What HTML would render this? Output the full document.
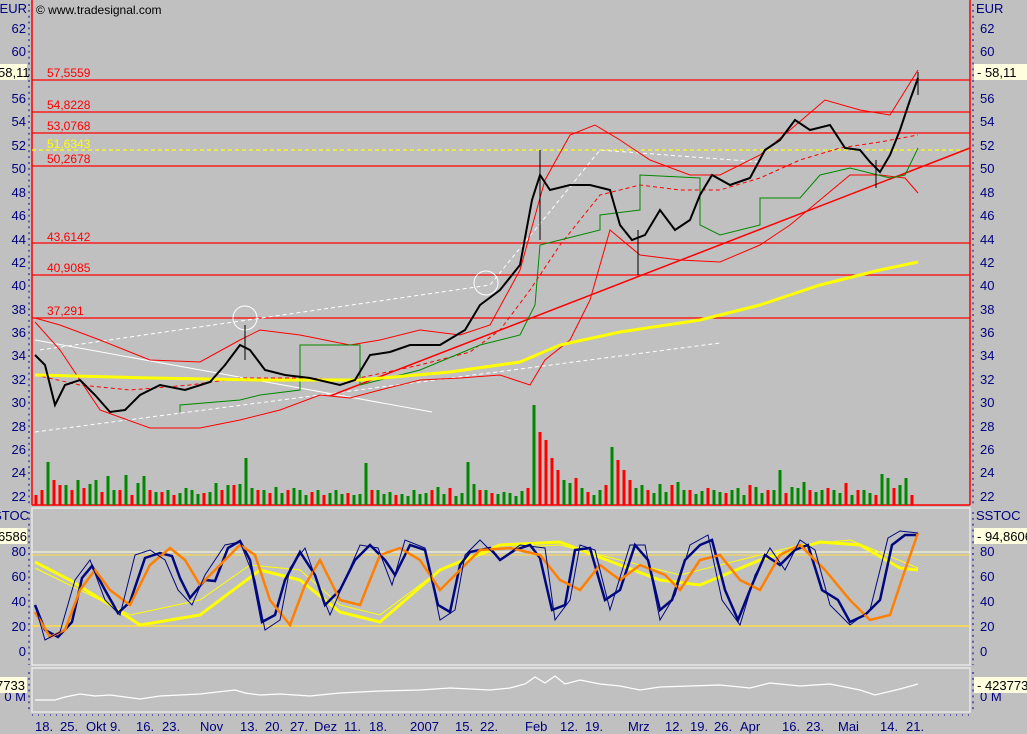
<!DOCTYPE html>
<html><head><style>
body{margin:0;width:1027px;height:734px;background:#c0c0c0;overflow:hidden;font-family:"Liberation Sans",sans-serif}
svg{position:absolute;left:0;top:0}
text{font-family:"Liberation Sans",sans-serif;font-size:13px}
</style></head><body>
<svg width="1027" height="734" viewBox="0 0 1027 734">
<line x1="32" y1="0" x2="32" y2="505" stroke="#f00" stroke-width="1.5"/>
<line x1="970" y1="0" x2="970" y2="505" stroke="#f00" stroke-width="1.5"/>
<line x1="32" y1="505" x2="970" y2="505" stroke="#f00" stroke-width="1.5"/>
<rect x="32" y="508" width="938" height="157" fill="none" stroke="#e8e8e8" stroke-width="1.5"/>
<rect x="32" y="668" width="938" height="44" fill="none" stroke="#e8e8e8" stroke-width="1.5"/>
<!-- axis ticks -->
<g stroke="#00007f" stroke-width="1" stroke-dasharray="2,3.85">
<line x1="29" y1="4" x2="29" y2="505"/><line x1="973" y1="4" x2="973" y2="505"/>
<line x1="29" y1="512" x2="29" y2="665"/><line x1="973" y1="512" x2="973" y2="665"/>
<line x1="29" y1="672" x2="29" y2="712"/><line x1="973" y1="672" x2="973" y2="712"/>
</g>
<text x="36" y="14" fill="#000" style="font-size:12px">© www.tradesignal.com</text>
<g stroke="#f00" stroke-width="1.2">
<line x1="32" y1="80" x2="970" y2="80"/><line x1="32" y1="112" x2="970" y2="112"/>
<line x1="32" y1="133" x2="970" y2="133"/><line x1="32" y1="166" x2="970" y2="166"/>
<line x1="32" y1="243" x2="970" y2="243"/><line x1="32" y1="275" x2="970" y2="275"/>
<line x1="32" y1="318" x2="970" y2="318"/></g>
<line x1="32" y1="150" x2="970" y2="150" stroke="#ff0" stroke-width="1.2" stroke-dasharray="4,3"/>
<g fill="#f00" style="font-size:12px"><text x="47" y="77" style="font-size:12px">57,5559</text><text x="47" y="109" style="font-size:12px">54,8228</text><text x="47" y="130" style="font-size:12px">53,0768</text><text x="47" y="163" style="font-size:12px">50,2678</text><text x="47" y="241" style="font-size:12px">43,6142</text><text x="47" y="272" style="font-size:12px">40,9085</text><text x="47" y="315" style="font-size:12px">37,291</text></g>
<text x="47" y="148" fill="#ff0" style="font-size:12px">51,6343</text>
<g stroke="#fff" stroke-width="1" fill="none">
<line x1="35" y1="340" x2="432" y2="412"/>
<path d="M35 432 L720 343" stroke-dasharray="4,3"/>
<path d="M40 350 L490 285 L600 150 L760 162" stroke-dasharray="4,3"/>
<circle cx="245" cy="318" r="12"/><circle cx="486" cy="283" r="12"/>
</g>
<line x1="330" y1="396" x2="970" y2="148" stroke="#f00" stroke-width="1.5"/>
<g fill="none" stroke="#f00" stroke-width="1">
<path d="M35 318 L60 325 L100 340 L150 360 L200 362 L240 340 L260 330 L300 335 L350 345 L380 340 L420 330 L460 335 L490 325 L520 270 L545 180 L570 135 L595 125 L620 140 L650 160 L690 175 L720 175 L760 155 L790 130 L825 100 L860 110 L890 115 L918 70"/>
<path d="M35 322 L60 350 L100 410 L150 428 L200 428 L240 420 L280 410 L320 395 L350 398 L380 390 L420 380 L460 378 L500 375 L530 385 L545 360 L570 340 L590 300 L610 230 L640 255 L680 260 L720 262 L760 245 L790 225 L820 200 L850 175 L880 175 L905 178 L918 193"/>
<path d="M35 375 L80 385 L130 390 L190 385 L240 378 L300 378 L350 380 L420 365 L470 352 L500 330 L530 290 L560 245 L600 195 L640 185 L680 190 L720 190 L760 178 L800 160 L840 148 L880 142 L918 135" stroke-dasharray="4,3"/>
</g>
<g fill="none" stroke="#080" stroke-width="1">
<path d="M180 412 L180 405 L240 400 L260 395 L300 390 L300 345 L360 345 L360 385 L420 370 L480 345 L520 335 L535 305 L540 245 L600 230 L600 215 L640 210 L640 175 L700 178 L700 225 L720 235 L760 225 L760 198 L800 198 L820 175 L850 168 L890 178 L905 175 L918 148"/>
</g>
<path d="M35 375 L150 378 L260 380 L360 380 L450 372 L520 362 L560 345 L620 332 L700 320 L760 305 L820 285 L880 270 L918 262" fill="none" stroke="#ff0" stroke-width="3"/>
<path d="M35 355 L45 365 L55 405 L65 385 L80 380 L95 395 L110 412 L125 410 L140 395 L160 385 L185 390 L210 382 L225 365 L240 345 L250 350 L265 370 L285 375 L310 378 L340 385 L355 380 L370 355 L390 352 L410 345 L440 345 L465 330 L480 305 L500 290 L520 265 L532 200 L540 175 L550 190 L570 185 L590 185 L610 190 L620 225 L632 240 L645 235 L660 210 L675 230 L690 220 L700 195 L712 175 L730 185 L750 178 L765 150 L780 140 L795 120 L810 130 L830 125 L845 148 L860 150 L870 162 L880 172 L890 155 L900 130 L910 100 L918 78" fill="none" stroke="#000" stroke-width="2"/>
<g stroke="#000" stroke-width="1">
<line x1="245" y1="325" x2="245" y2="360"/><line x1="540" y1="150" x2="540" y2="240"/><line x1="638" y1="230" x2="638" y2="275"/><line x1="918" y1="72" x2="918" y2="95"/><line x1="876" y1="160" x2="876" y2="188"/>
</g>
<g stroke-width="3">
<path stroke="#f00" d="M36 505V495M42 505V490M54 505V480M60 505V485M72 505V490M84 505V488M102 505V492M120 505V490M132 505V495M150 505V490M162 505V492M174 505V495M204 505V493M222 505V490M234 505V485M258 505V490M270 505V493M288 505V490M312 505V492M324 505V495M348 505V493M372 505V490M396 505V495M432 505V490M450 505V488M480 505V490M492 505V493M528 505V488M540 505V432M546 505V440M552 505V458M558 505V470M576 505V478M588 505V492M606 505V485M618 505V460M624 505V470M630 505V480M648 505V490M672 505V485M690 505V490M708 505V488M726 505V493M750 505V485M768 505V490M786 505V493M810 505V490M828 505V488M846 505V483M858 505V490M876 505V495M894 505V488M912 505V495"/>
<path stroke="#080" d="M48 505V462M66 505V485M78 505V480M90 505V484M96 505V480M108 505V476M114 505V490M126 505V475M138 505V483M144 505V476M156 505V492M168 505V490M180 505V493M186 505V488M192 505V490M198 505V494M210 505V492M216 505V483M228 505V485M240 505V484M246 505V458M252 505V488M264 505V490M276 505V487M282 505V493M294 505V488M300 505V490M306 505V495M318 505V490M330 505V493M336 505V490M342 505V494M354 505V495M360 505V494M366 505V463M378 505V490M384 505V494M390 505V492M402 505V494M408 505V496M414 505V490M420 505V494M426 505V493M438 505V487M444 505V494M456 505V496M462 505V493M468 505V462M474 505V484M486 505V490M498 505V494M504 505V492M510 505V493M516 505V496M522 505V491M534 505V405M564 505V480M570 505V483M582 505V488M594 505V495M600 505V490M612 505V447M636 505V488M642 505V485M654 505V493M660 505V484M666 505V492M678 505V482M684 505V490M696 505V494M702 505V491M714 505V490M720 505V492M732 505V490M738 505V488M744 505V495M756 505V487M762 505V493M774 505V490M780 505V470M792 505V487M798 505V488M804 505V482M816 505V492M822 505V490M834 505V490M840 505V493M852 505V495M864 505V490M870 505V493M882 505V474M888 505V478M900 505V485M906 505V478"/>
</g>
<line x1="32" y1="552" x2="970" y2="552" stroke="#ffd" stroke-width="1"/>
<line x1="32" y1="555" x2="970" y2="555" stroke="#fd4" stroke-width="1"/>
<line x1="32" y1="626" x2="970" y2="626" stroke="#fd4" stroke-width="1.5"/>
<path d="M35 562 L70 580 L110 605 L140 625 L200 615 L260 570 L300 580 L340 612 L380 622 L440 570 L500 545 L560 542 L620 565 L660 580 L700 585 L760 560 L820 542 L860 545 L900 568 L918 570" fill="none" stroke="#ff0" stroke-width="3"/>
<path d="M35 568 L80 590 L130 615 L200 600 L250 565 L300 570 L340 605 L380 615 L440 570 L500 548 L560 545 L620 560 L680 575 L740 560 L800 545 L850 540 L918 568" fill="none" stroke="#ff0" stroke-width="1"/>
<path d="M35 605 L45 630 L58 637 L72 622 L82 578 L92 566 L105 590 L118 613 L130 602 L145 558 L160 553 L172 556 L180 578 L190 598 L205 580 L215 581 L228 548 L240 541 L250 560 L262 622 L275 615 L285 580 L300 552 L315 575 L325 605 L340 590 L355 560 L370 545 L385 560 L395 575 L410 545 L425 550 L438 605 L450 612 L460 565 L470 552 L490 548 L500 560 L515 550 L530 545 L540 558 L552 610 L565 605 L575 550 L590 548 L605 600 L620 590 L635 545 L648 560 L660 610 L672 600 L685 560 L700 545 L712 540 L725 590 L738 620 L752 585 L765 555 L780 565 L795 550 L808 545 L822 590 L838 600 L850 622 L865 615 L880 600 L892 545 L905 535 L918 535" fill="none" stroke="#00087f" stroke-width="2.5"/>
<path d="M35 612 L50 637 L65 630 L80 590 L95 570 L110 590 L130 605 L150 565 L170 548 L185 560 L200 585 L220 565 L240 545 L255 555 L270 600 L290 625 L305 585 L320 560 L340 600 L360 605 L380 555 L400 548 L420 560 L440 590 L460 570 L480 550 L510 548 L540 555 L560 580 L580 590 L600 565 L620 580 L640 565 L665 575 L680 590 L700 560 L720 555 L740 580 L760 590 L780 555 L800 545 L825 570 L850 600 L870 620 L890 615 L905 570 L918 533" fill="none" stroke="#ff7f00" stroke-width="2.5"/>
<path d="M35 605 L45 640 L60 632 L75 580 L90 560 L105 600 L120 615 L135 555 L150 550 L165 560 L178 590 L192 605 L205 575 L225 545 L240 542 L255 580 L265 630 L280 620 L290 568 L305 548 L318 585 L330 615 L345 580 L360 545 L378 548 L392 585 L405 540 L425 548 L440 620 L455 610 L465 555 L480 540 L500 560 L520 545 L545 548 L555 620 L570 600 L580 545 L595 550 L610 610 L630 545 L645 545 L660 620 L675 595 L690 545 L708 535 L722 600 L740 625 L755 575 L770 548 L785 570 L800 540 L815 550 L830 605 L850 625 L870 610 L888 538 L900 531 L918 533" fill="none" stroke="#00087f" stroke-width="1"/>
<path d="M35 700 L55 700 L65 697 L80 694 L95 696 L110 695 L140 699 L160 696 L200 694 L235 690 L245 693 L260 695 L280 694 L310 696 L340 693 L380 691 L420 690 L450 688 L490 690 L510 688 L525 684 L535 677 L545 683 L555 676 L565 684 L580 680 L600 684 L620 686 L640 690 L660 687 L690 686 L720 685 L750 688 L770 683 L800 686 L830 684 L860 690 L875 695 L900 689 L918 684" fill="none" stroke="#fff" stroke-width="1.2"/>
<g fill="#00007f" text-anchor="end">
<text x="27" y="13">EUR</text>
<text x="26" y="33">62</text><text x="26" y="56">60</text><text x="26" y="103">56</text><text x="26" y="126">54</text><text x="26" y="150">52</text><text x="26" y="173">50</text><text x="26" y="197">48</text><text x="26" y="220">46</text><text x="26" y="244">44</text><text x="26" y="267">42</text><text x="26" y="290">40</text><text x="26" y="314">38</text><text x="26" y="337">36</text><text x="26" y="360">34</text><text x="26" y="384">32</text><text x="26" y="407">30</text><text x="26" y="431">28</text><text x="26" y="454">26</text><text x="26" y="477">24</text><text x="26" y="501">22</text>
<text x="29" y="520">STOC</text>
<text x="26" y="556">80</text><text x="26" y="581">60</text><text x="26" y="606">40</text><text x="26" y="631">20</text><text x="26" y="656">0</text>
<text x="26" y="701">0 M</text>
</g>
<rect x="0" y="64" width="27" height="16" fill="#ffffe0"/><text x="-2" y="77" fill="#000">58,11</text>
<rect x="0" y="528" width="27" height="16" fill="#ffffe0"/><text x="-2" y="541" fill="#000">6586</text>
<rect x="0" y="677" width="27" height="16" fill="#ffffe0"/><text x="-4" y="690" fill="#000">7733</text>
<g fill="#00007f">
<text x="976" y="13">EUR</text>
<text x="980" y="33">62</text><text x="980" y="56">60</text><text x="980" y="103">56</text><text x="980" y="126">54</text><text x="980" y="150">52</text><text x="980" y="173">50</text><text x="980" y="197">48</text><text x="980" y="220">46</text><text x="980" y="244">44</text><text x="980" y="267">42</text><text x="980" y="290">40</text><text x="980" y="314">38</text><text x="980" y="337">36</text><text x="980" y="360">34</text><text x="980" y="384">32</text><text x="980" y="407">30</text><text x="980" y="431">28</text><text x="980" y="454">26</text><text x="980" y="477">24</text><text x="980" y="501">22</text>
<text x="976" y="520">SSTOC</text>
<text x="980" y="556">80</text><text x="980" y="581">60</text><text x="980" y="606">40</text><text x="980" y="631">20</text><text x="980" y="656">0</text>
<text x="980" y="701">0 M</text>
</g>
<rect x="974" y="64" width="53" height="16" fill="#ffffe0"/><text x="977" y="77" fill="#000">- 58,11</text>
<rect x="974" y="528" width="53" height="16" fill="#ffffe0"/><text x="977" y="541" fill="#000">- 94,8606</text>
<rect x="974" y="677" width="53" height="16" fill="#ffffe0"/><text x="977" y="690" fill="#000">- 4237733</text>
<g fill="#00007f">
<text x="35" y="731">18.</text><text x="60" y="731">25.</text><text x="86" y="731">Okt</text><text x="110" y="731">9.</text><text x="136" y="731">16.</text><text x="162" y="731">23.</text><text x="200" y="731">Nov</text><text x="240" y="731">13.</text><text x="265" y="731">20.</text><text x="290" y="731">27.</text><text x="314" y="731">Dez</text><text x="344" y="731">11.</text><text x="369" y="731">18.</text><text x="410" y="731">2007</text><text x="455" y="731">15.</text><text x="480" y="731">22.</text><text x="525" y="731">Feb</text><text x="560" y="731">12.</text><text x="585" y="731">19.</text><text x="628" y="731">Mrz</text><text x="665" y="731">12.</text><text x="690" y="731">19.</text><text x="714" y="731">26.</text><text x="740" y="731">Apr</text><text x="782" y="731">16.</text><text x="806" y="731">23.</text><text x="838" y="731">Mai</text><text x="880" y="731">14.</text><text x="906" y="731">21.</text>
</g>
<line x1="32" y1="715" x2="970" y2="715" stroke="#00007f" stroke-width="1" stroke-dasharray="1,5"/>
</svg>
</body></html>
